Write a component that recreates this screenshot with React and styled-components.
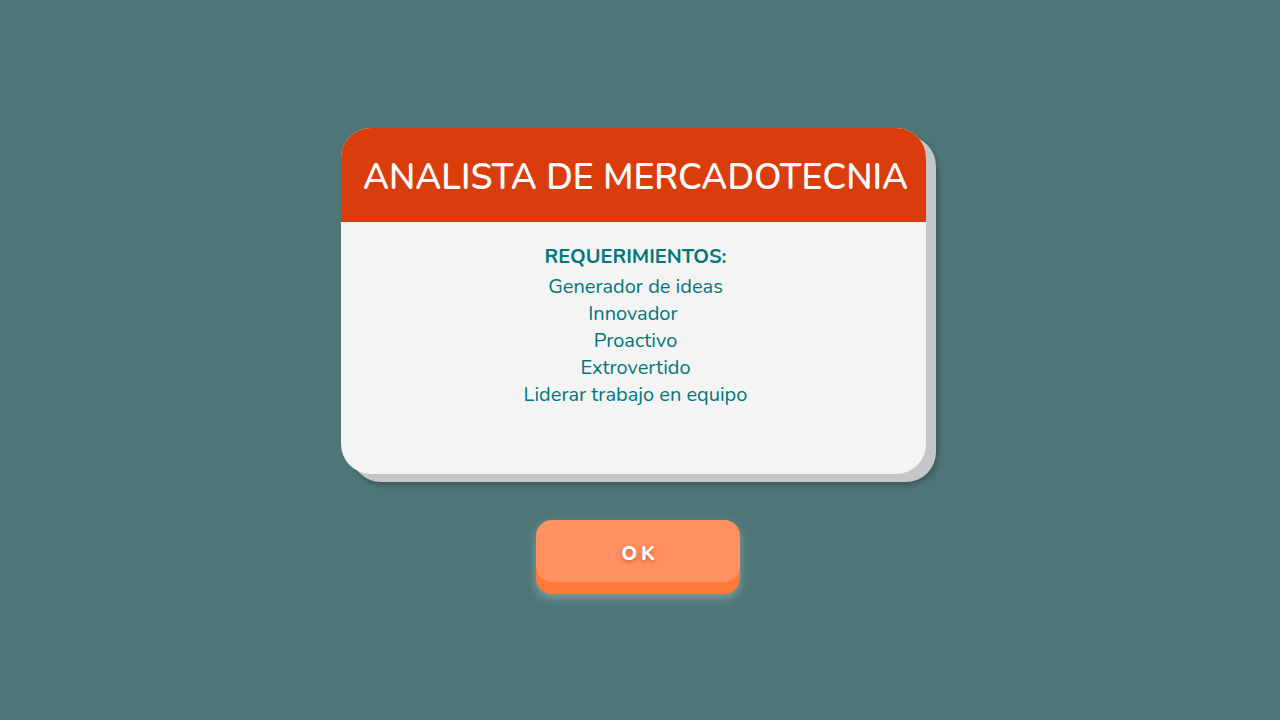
import styled, { createGlobalStyle } from "styled-components";

const GlobalStyle = createGlobalStyle`
  html, body {
    margin: 0;
    padding: 0;
    background: #4e7679;
    font-family: "Nunito", Lato, "Open Sans", sans-serif;
  }
`;

const Page = styled.div`
  width: 1280px;
  height: 720px;
  display: flex;
  flex-direction: column;
  align-items: center;
  padding-top: 128px;
  box-sizing: border-box;
`;

const CardWrap = styled.div`
  width: 595px;
  padding-right: 10px;
  padding-bottom: 8px;
  box-sizing: border-box;
  margin-left: -4px;
`;

const Card = styled.div`
  width: 585px;
  height: 346px;
  border-radius: 30px;
  background: #f4f4f4;
  overflow: hidden;
  box-shadow: 10px 8px 0 #c5c6c8, 12px 11px 6px rgba(0, 0, 0, 0.25);
  display: flex;
  flex-direction: column;
`;

const Header = styled.div`
  height: 94px;
  background: #d93d0b;
  display: flex;
  align-items: center;
  justify-content: center;
  padding: 4px 0 0 5px;
  box-sizing: border-box;
`;

const Title = styled.h1`
  margin: 0;
  color: #fbfbfb;
  font-size: 35.4px;
  font-weight: 600;
  letter-spacing: 0;
`;

const Body = styled.div`
  display: flex;
  flex-direction: column;
  align-items: center;
  padding: 21px 0 0 5px;
  color: #00777b;
  font-size: 20px;
  line-height: 27px;
`;

const Heading = styled.div`
  font-weight: 700;
  margin-bottom: 3px;
`;

const Item = styled.div`
  white-space: pre;
`;

const Button = styled.button`
  margin-top: 38px;
  width: 204px;
  height: 74px;
  border: none;
  border-radius: 16px;
  background: #ff7a3a;
  padding: 0 0 12px;
  cursor: pointer;
  box-shadow: 0 4px 10px rgba(255, 255, 255, 0.3);
  margin-left: -4px;
`;

const ButtonFace = styled.span`
  display: flex;
  align-items: center;
  justify-content: center;
  height: 62px;
  padding: 4px 0 0 4px;
  box-sizing: border-box;
  border-radius: 16px;
  background: #ff9061;
  color: #fff;
  font-family: "Nunito", Lato, sans-serif;
  font-size: 20px;
  font-weight: 800;
  letter-spacing: 4px;
  text-shadow: 0 2px 4px rgba(180, 60, 20, 0.6);
`;

const items = [
  "Generador de ideas",
  "Innovador ",
  "Proactivo",
  "Extrovertido",
  "Liderar trabajo en equipo",
];

export default function App() {
  return (
    <>
      <GlobalStyle />
      <Page>
        <CardWrap>
          <Card>
            <Header>
              <Title>ANALISTA DE MERCADOTECNIA</Title>
            </Header>
            <Body>
              <Heading>REQUERIMIENTOS:</Heading>
              {items.map((item) => (
                <Item key={item}>{item}</Item>
              ))}
            </Body>
          </Card>
        </CardWrap>
        <Button>
          <ButtonFace>OK</ButtonFace>
        </Button>
      </Page>
    </>
  );
}
